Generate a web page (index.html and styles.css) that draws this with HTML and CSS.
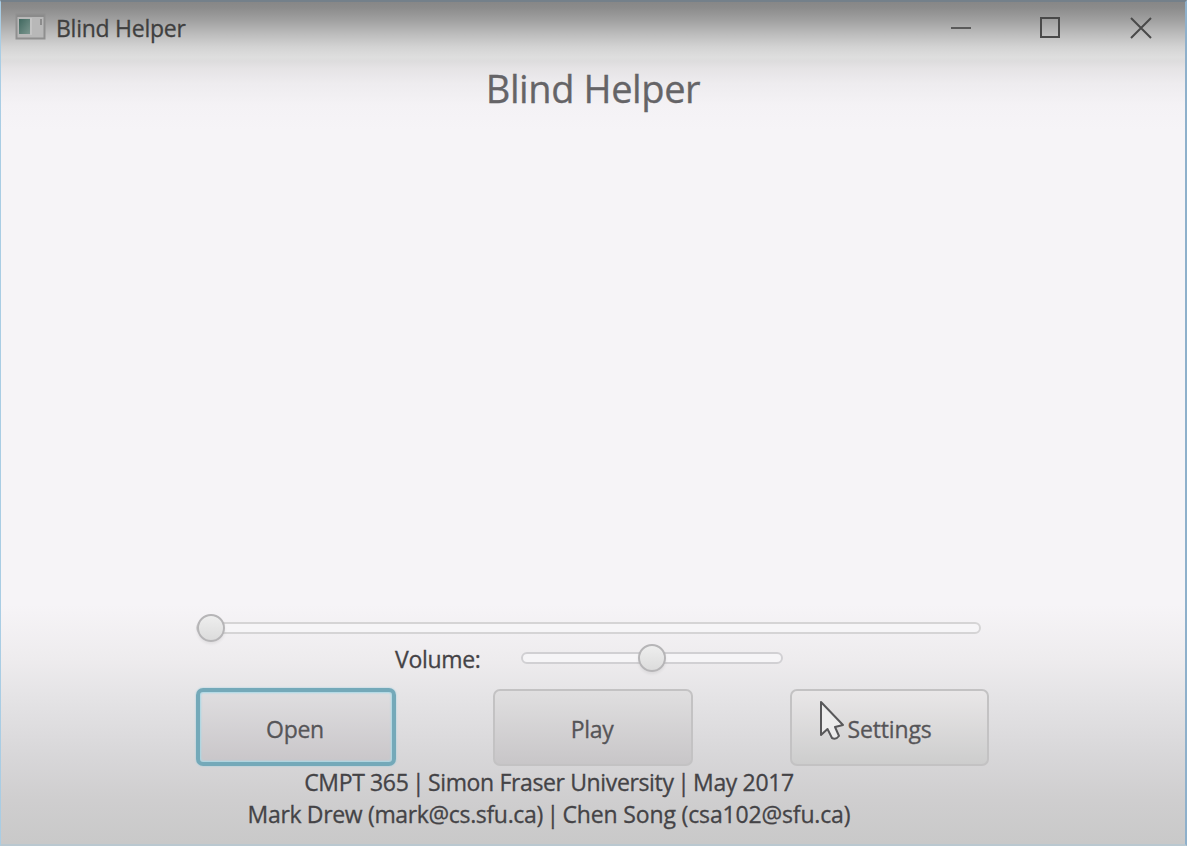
FILE: index.html
```html
<!DOCTYPE html>
<html lang="en">
<head>
<meta charset="utf-8">
<title>Blind Helper</title>
<link rel="stylesheet" href="styles.css">
</head>
<body>
<main class="window">
  <header class="titlebar">
    <svg class="app-icon" width="32" height="28" viewBox="0 0 32 28">
      <defs><linearGradient id="pane" x1="0" x2="1" y2="1"><stop offset="0" stop-color="#40685f"/><stop offset="1" stop-color="#7c968f"/></linearGradient></defs>
      <rect x="1.5" y="1.5" width="28" height="24" fill="#b8b8b8" stroke="#8f8f8f" stroke-width="2"/>
      <path d="M2 3H29" stroke="#8b8b8b" stroke-width="2"/>
      <rect x="4" y="6" width="11" height="15" fill="url(#pane)"/>
      <path d="M16 5V22" stroke="#c4c4c4" stroke-width="2"/>
      <path d="M26 6V12" stroke="#8c8c8c" stroke-width="2"/>
    </svg>
    <span class="caption">Blind Helper</span>
    <svg class="controls" width="204" height="26" viewBox="0 0 204 26" fill="none" stroke="#494949" stroke-width="2">
      <path d="M1 14H21" stroke="#5a5a5a"/>
      <rect x="91" y="4" width="18" height="19"/>
      <path d="M181 4L201 24M201 4L181 24"/>
    </svg>
  </header>
  <h1 class="title"><span>Blind Helper</span></h1>
  <div class="panel">
    <div class="slider seek"><i class="thumb"></i></div>
    <div class="volume">
      <label class="volume-label">Volume:</label>
      <div class="slider level"><i class="thumb"></i></div>
    </div>
    <div class="buttons">
      <button class="btn focused">Open</button>
      <button class="btn">Play</button>
      <button class="btn light">Settings
        <svg class="cursor" width="28" height="42" viewBox="0 0 28 42"><path d="M2 2V35L8.500 29L13 38Q17 40 20 36L16 27L24 25Z" fill="#ececec" stroke="#58585a" stroke-width="2" stroke-linejoin="round"/></svg>
      </button>
    </div>
  </div>
  <footer class="credits">
    <div class="course">CMPT 365 <span class="bar">|</span> Simon Fraser University <span class="bar">|</span> May 2017</div>
    <div class="people">Mark Drew (mark@cs.sfu.ca) <span class="bar">|</span> <span class="author">Chen Song (csa102@sfu.ca)</span></div>
  </footer>
</main>
</body>
</html>
```

FILE: styles.css
```css
* { box-sizing: border-box; }
body { margin: 0; font-family: "Open Sans", "Noto Sans", sans-serif; color: #444346; -webkit-text-stroke: 0.3px; }
.window {
  width: 1187px; height: 846px; overflow: hidden;
  display: flex; flex-direction: column;
  border: solid #a9cde4; border-width: 2px 2px 2px 1px;
  border-top-color: #74808a; border-right-color: #8eb0cb; border-bottom-color: #bac8d0;
  background: linear-gradient(#858585 0, #8c8c8c 8px, #a0a0a0 20px, #bcbcbc 34px, #d3d3d3 47px, #dedede 57px, #dddcdd 61px, #e5e3e5 68px, #eeecef 84px, #f4f2f5 105px, #f6f4f7 130px, #f6f4f7 605px, #eeecee 658px, #e5e4e6 695px, #d9d8da 750px, #cfcecf 800px, #c9c9c9 842px);
  background-origin: border-box;
  white-space: nowrap;
}
.titlebar { height: 60px; display: flex; align-items: flex-start; padding: 10px 31px 0 14px; }
.app-icon { margin-top: 1px; }
.caption { margin-left: 9px; font-size: 23px; line-height: 32px; letter-spacing: -0.25px; color: #3f3f3f; }
.controls { margin-left: auto; margin-top: 2px; }
.title { margin: 0; height: 52px; text-align: center; font-size: 38px; line-height: 52px; font-weight: 400; letter-spacing: -0.4px; color: #656467; }
.panel { margin: auto 0 0 195px; width: 793px; }
.slider { position: relative; height: 12px; border: 2px solid #d5d4d5; border-radius: 6px; background: #f6f5f7; }
.seek { width: 785px; }
.thumb { position: absolute; left: 0; top: -10px; width: 28px; height: 28px; border: 2px solid #b6b5b7; border-radius: 50%; background: linear-gradient(#eeeeee, #dcdcdc); box-shadow: 0 2px 3px #0001; }
.seek .thumb { left: -1px; }
.volume { display: flex; align-items: center; height: 34px; margin: 8px 0 12px 199px; }
.volume-label { width: 126px; font-size: 23px; letter-spacing: -0.3px; }
.level { width: 262px; border-color: #d1d0d3; margin-top: -2px; }
.level .thumb { left: 115px; }
.buttons { display: flex; align-items: flex-end; height: 78px; gap: 97px; }
.btn { position: relative; width: 200px; height: 77px; padding: 3px 0 0; border: 2px solid #c3c2c3; border-radius: 7px; background: linear-gradient(#e0dfe0, #c8c6c8); font: 23px "Open Sans", "Noto Sans", sans-serif; letter-spacing: -0.3px; color: #565558; padding-right: 2px; }
.focused { height: 78px; padding: 4px 2px 0 0; border: 4px solid #74a9b9; box-shadow: 0 0 2px #97cee0, inset 0 0 2px 1px #a7d9e7; background: linear-gradient(#dfdee0, #c9c6c9); }
.light { width: 199px; padding-right: 0; letter-spacing: -0.15px; background: linear-gradient(#e9e7e8, #cdcdcd); }
.cursor { position: absolute; left: 27px; top: 9px; }
.credits { display: flex; flex-direction: column; width: 1096px; height: 78px; align-items: center; font-size: 23px; line-height: 32px; }
.bar { margin: 0 -2px; }
.course { letter-spacing: -0.36px; }
.people { letter-spacing: -0.34px; }
.author { letter-spacing: -0.15px; }
```
